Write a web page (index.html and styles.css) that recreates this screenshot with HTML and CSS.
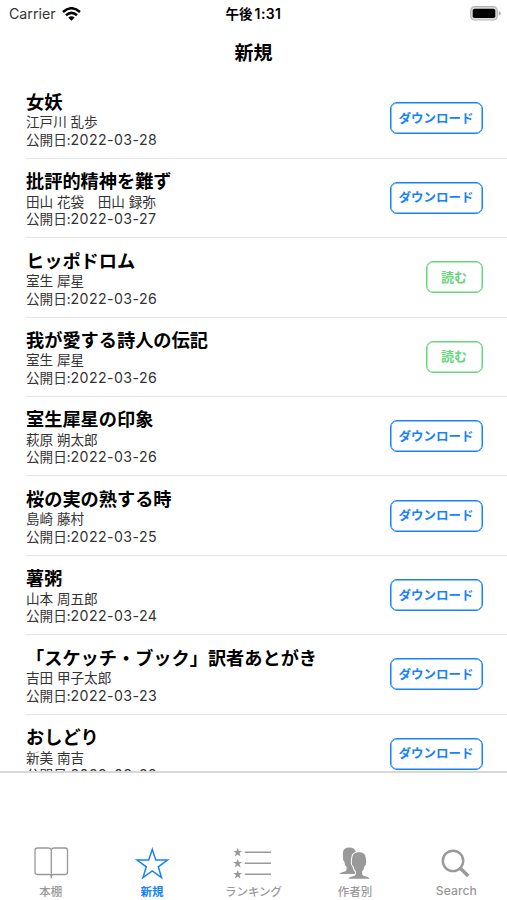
FILE: index.html
```html
<!DOCTYPE html>
<html lang="ja">
<head>
<meta charset="utf-8">
<title>新規</title>
<link rel="stylesheet" href="styles.css">
</head>
<body>
<div class="app">
  <header class="status">
    <div class="carrier"><span>Carrier</span>
      <svg width="19" height="14" viewBox="0 0 19 14" fill="none" stroke="#000" stroke-width="2.500"><path d="M1 5Q9.500-2.500 18 5M4 8.300Q9.500 3.500 15 8.300"/><path d="M6.300 10.600Q9.500 8 12.700 10.600L9.500 13.800Z" fill="#000" stroke="none"/></svg>
    </div>
    <div class="clock">午後<span class="digits">1:31</span></div>
    <div class="battery">
      <svg width="32" height="15" viewBox="0 0 32 15"><rect x=".7" y=".7" width="26.600" height="13.300" rx="4" fill="#ddd" stroke="#b5b5b5" stroke-width="1.200"/><rect x="2.700" y="2.700" width="22.600" height="9.400" rx="1.800"/><path d="M28.800 5Q30.800 6 30.800 7.400T28.800 9.800Z" fill="#aaa"/></svg>
    </div>
  </header>
  <h1 class="heading">新規</h1>
  <main class="list">
    <article class="row"><div class="book"><h2>女妖</h2><p class="author">江戸川 乱歩</p><p class="date">公開日:<span>2022-03-28</span></p></div><button class="btn">ダウンロード</button></article>
    <article class="row"><div class="book"><h2>批評的精神を難ず</h2><p class="author">田山 花袋　田山 録弥</p><p class="date">公開日:<span>2022-03-27</span></p></div><button class="btn">ダウンロード</button></article>
    <article class="row"><div class="book"><h2>ヒッポドロム</h2><p class="author">室生 犀星</p><p class="date">公開日:<span>2022-03-26</span></p></div><button class="btn read">読む</button></article>
    <article class="row"><div class="book"><h2>我が愛する詩人の伝記</h2><p class="author">室生 犀星</p><p class="date">公開日:<span>2022-03-26</span></p></div><button class="btn read">読む</button></article>
    <article class="row"><div class="book"><h2>室生犀星の印象</h2><p class="author">萩原 朔太郎</p><p class="date">公開日:<span>2022-03-26</span></p></div><button class="btn">ダウンロード</button></article>
    <article class="row"><div class="book"><h2>桜の実の熟する時</h2><p class="author">島崎 藤村</p><p class="date">公開日:<span>2022-03-25</span></p></div><button class="btn">ダウンロード</button></article>
    <article class="row"><div class="book"><h2>薯粥</h2><p class="author">山本 周五郎</p><p class="date">公開日:<span>2022-03-24</span></p></div><button class="btn">ダウンロード</button></article>
    <article class="row"><div class="book"><h2>「スケッチ・ブック」訳者あとがき</h2><p class="author">吉田 甲子太郎</p><p class="date">公開日:<span>2022-03-23</span></p></div><button class="btn">ダウンロード</button></article>
    <article class="row"><div class="book"><h2>おしどり</h2><p class="author">新美 南吉</p><p class="date">公開日:<span>2022-03-22</span></p></div><button class="btn">ダウンロード</button></article>
  </main>
  <nav class="tabs">
    <div class="tab">
      <svg width="40" height="36" viewBox="0 0 40 36" fill="none" stroke="#999" stroke-width="1.300"><path d="M20.300 34.500V5.800Q19.800 4 17.500 4H6.500Q4 4 4 6.500V28Q4 30.500 6.500 30.500H18Q20.300 30.500 20.300 32.500Q20.300 30.500 22.600 30.500H34Q36.500 30.500 36.500 28V6.500Q36.500 4 34 4H23Q20.800 4 20.300 5.800"/></svg>
      <span>本棚</span>
    </div>
    <div class="tab active">
      <svg width="40" height="36" viewBox="0 0 40 36" fill="none" stroke="#1683f7" stroke-width="1.500"><path d="M20.300 5.400L23.800 15.900L35.500 16L26.300 22.800L29.500 33.600L20.300 27L11 33.600L14.300 22.800L5 16L16.700 15.900Z"/></svg>
      <span>新規</span>
    </div>
    <div class="tab">
      <svg width="40" height="36" viewBox="0 0 40 36" fill="#999"><defs><path id="star" d="M0-4.500L1.200-1.400L4.400-1.400L1.800.6L2.800 3.900L0 1.900L-2.800 3.900L-1.800.6L-4.400-1.400L-1.200-1.400Z"/></defs><use href="#star" x="4.700" y="8.500"/><use href="#star" x="4.700" y="19.500"/><use href="#star" x="4.700" y="30.500"/><path d="M11.800 8.200H38M11.800 19.200H38M11.800 30.200H38" stroke="#999" stroke-width="1.500"/></svg>
      <span>ランキング</span>
    </div>
    <div class="tab">
      <svg width="40" height="36" viewBox="0 0 40 36" fill="#999"><path d="M4.500 30Q5 28.500 10.500 27.200Q12 26.500 11.600 23Q9.500 21 9.300 17.500Q7.500 16 8 13L7.800 9.300Q8 3.600 14.200 3.600Q20.700 3.600 21 9.500V30Z"/><path stroke="#fff" stroke-width="2" paint-order="stroke" d="M13.300 34.800Q14 33 19.500 31.800Q21.300 31 20.900 27.500Q18.900 25.500 18.500 22.300Q16.700 21.200 16.800 18L17.200 14Q17.500 8.300 24 8.300Q30.500 8.300 30.800 14L31.200 18Q31.300 21.200 29.500 22.300Q29.100 25.500 27.100 27.500Q26.700 31 28.500 31.800Q34 33 34.700 34.800Z"/></svg>
      <span>作者別</span>
    </div>
    <div class="tab">
      <svg width="40" height="36" viewBox="0 0 40 36" fill="none" stroke="#999"><circle cx="17" cy="16.900" r="10.200" stroke-width="2.400"/><path d="M24.500 24.500L32.300 32" stroke-width="3.500"/></svg>
      <span class="latin">Search</span>
    </div>
  </nav>
</div>
</body>
</html>
```

FILE: styles.css
```css
* { box-sizing: border-box; }
body {
  margin: 0;
  background: #fff;
  color: #000;
  font-family: "Noto Sans CJK JP", sans-serif;
}
.app {
  width: 507px;
  height: 900px;
  display: flex;
  flex-direction: column;
  overflow: hidden;
}
.status {
  height: 27px;
  flex: none;
  display: grid;
  grid-template-columns: 1fr auto 1fr;
  align-items: center;
  padding: 0 5px 0 9px;
  font-size: 13.5px;
}
.carrier {
  display: flex;
  align-items: center;
  gap: 6px;
  font: 14.2px/20px Inter, sans-serif;
  color: #333;
}
.clock { font-weight: 700; line-height: 20px; margin-right: 4px; }
.digits { font: 600 14px/20px Inter, sans-serif; margin-left: 2px; letter-spacing: 0.4px; }
.battery { display: flex; justify-content: flex-end; }
.heading {
  height: 52.2px;
  flex: none;
  margin: 0;
  font-size: 19px;
  font-weight: 700;
  line-height: 49px;
  text-align: center;
}
.list {
  height: 693.8px;
  flex: none;
  overflow: hidden;
  border-bottom: 2px solid #d8d8d8;
}
.row {
  height: 79.45px;
  margin-left: 26px;
  padding-right: 24.5px;
  border-bottom: 1px solid #e6e6e6;
  display: flex;
  justify-content: space-between;
  align-items: center;
}
.book { white-space: nowrap; }
.book h2 { margin: 0; font-size: 18.2px; font-weight: 700; line-height: 24px; }
.book p { margin: 0; font-size: 13.6px; line-height: 17.5px; color: #333; }
.book .author { word-spacing: 0.7px; padding-top: 0.5px; }
.date span { font-family: Inter, sans-serif; font-size: 14.2px; letter-spacing: 0.4px; }
.btn {
  width: 93px;
  height: 32px;
  padding: 0 0 1px;
  border: 1px solid #1683f7;
  box-shadow: inset 0 0 0 0.5px #1683f7;
  border-radius: 7px;
  background: #fff;
  color: #1683f7;
  font: 700 12.5px/20px "Noto Sans CJK JP", sans-serif;
}
.read { width: 57px; border-color: #65d77a; box-shadow: inset 0 0 0 0.5px #65d77a; color: #65d77a; font-size: 13px; }
.tabs {
  height: 127px;
  flex: none;
  padding-top: 71px;
  display: grid;
  grid-template-columns: repeat(5, 1fr);
}
.tab {
  display: flex;
  flex-direction: column;
  align-items: center;
  color: #999;
  font-size: 11.5px;
  font-weight: 500;
  line-height: 16px;
}
.tab svg { margin-bottom: 3px; }
.active { color: #1683f7; font-weight: 700; }
.latin { font-family: Inter, sans-serif; font-size: 12.2px; }
```
